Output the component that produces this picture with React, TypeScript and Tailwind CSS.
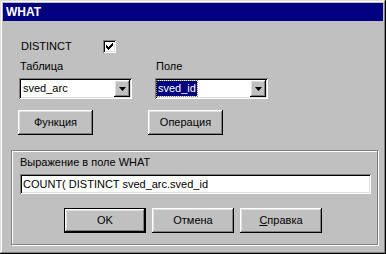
import React from "react";

const raised =
  "shadow-[inset_-1px_-1px_#000,inset_1px_1px_#fff,inset_-2px_-2px_#808080,inset_2px_2px_#dfdfdf]";
const sunken =
  "shadow-[inset_1px_1px_#808080,inset_-1px_-1px_#fff,inset_2px_2px_#000,inset_-2px_-2px_#dfdfdf]";

function Button({ children, def }: { children: React.ReactNode; def?: boolean }) {
  if (def) {
    return (
      <div className="w-[82px] h-[25px] border border-black">
        <div className={`w-full h-full bg-[#c0c0c0] flex items-center justify-center ${raised}`}>{children}</div>
      </div>
    );
  }
  return (
    <div className={`h-[25px] bg-[#c0c0c0] flex items-center justify-center ${raised}`}>{children}</div>
  );
}

function Combo({ value, selected }: { value: string; selected?: boolean }) {
  return (
    <div className={`relative h-[21px] bg-white flex items-center ${sunken}`}>
      {selected ? (
        <span className="ml-[2px] h-[15px] px-[1px] flex items-center bg-[#000080] text-white outline-1 outline-dotted outline-[#808080]">
          {value}
        </span>
      ) : (
        <span className="ml-[4px]">{value}</span>
      )}
      <div className={`absolute right-[2px] top-[2px] w-[16px] h-[17px] bg-[#c0c0c0] flex items-center justify-center ${raised}`}>
        <svg width="7" height="4" viewBox="0 0 7 4">
          <path d="M0 0h7L3.5 4z" fill="#000" />
        </svg>
      </div>
    </div>
  );
}

export default function App() {
  return (
    <div
      className={`w-[386px] h-[254px] bg-[#c0c0c0] p-[3px] text-[11px] leading-[13px] text-black font-['Liberation_Sans',Arial,sans-serif] shadow-[inset_-1px_-1px_#000,inset_1px_1px_#dfdfdf,inset_-2px_-2px_#808080,inset_2px_2px_#fff]`}
    >
      {/* title bar */}
      <div className="h-[18px] bg-[#000080] text-white font-bold text-[12px] flex items-center pl-[3px]">WHAT</div>

      {/* DISTINCT */}
      <div className="mt-[19px] h-[13px] flex items-center">
        <span className="ml-[18px] w-[82px]">DISTINCT</span>
        <div className={`w-[13px] h-[13px] bg-white flex items-center justify-center ${sunken}`}>
          <svg width="7" height="7" viewBox="0 0 7 7">
            <path d="M0 2h1v1h1v1h1V3h1V2h1V1h1V0h1v3H6v1H5v1H4v1H3v1H2V6H1V5H0z" fill="#000" />
          </svg>
        </div>
      </div>

      {/* table / field */}
      <div className="mt-[7px] ml-[16px] grid grid-cols-[113px_113px] gap-x-[23px]">
        <span className="pl-[1px]">Таблица</span>
        <span className="pl-[1px]">Поле</span>
        <div className="mt-[5px]">
          <Combo value="sved_arc" />
        </div>
        <div className="mt-[5px]">
          <Combo value="sved_id" selected />
        </div>
      </div>

      {/* action buttons */}
      <div className="mt-[11px] ml-[15px] flex gap-[55px]">
        <div className="w-[75px]">
          <Button>Функция</Button>
        </div>
        <div className="w-[75px]">
          <Button>Операция</Button>
        </div>
      </div>

      {/* group */}
      <div className="mt-[15px] ml-[8px] w-[367px] h-[95px] border border-[#808080] shadow-[inset_1px_1px_#fff,1px_1px_#fff] pl-[8px]">
        <div className="mt-[5px]">Выражение в поле WHAT</div>
        <div className={`mt-[5px] w-[351px] h-[20px] bg-white flex items-center pl-[3px] ${sunken}`}>
          COUNT( DISTINCT sved_arc.sved_id
        </div>
        <div className="mt-[14px] ml-[44px] flex gap-[6px]">
          <Button def>OK</Button>
          <div className="w-[82px]">
            <Button>Отмена</Button>
          </div>
          <div className="w-[82px]">
            <Button>
              <span>
                <span className="underline">С</span>правка
              </span>
            </Button>
          </div>
        </div>
      </div>
    </div>
  );
}
